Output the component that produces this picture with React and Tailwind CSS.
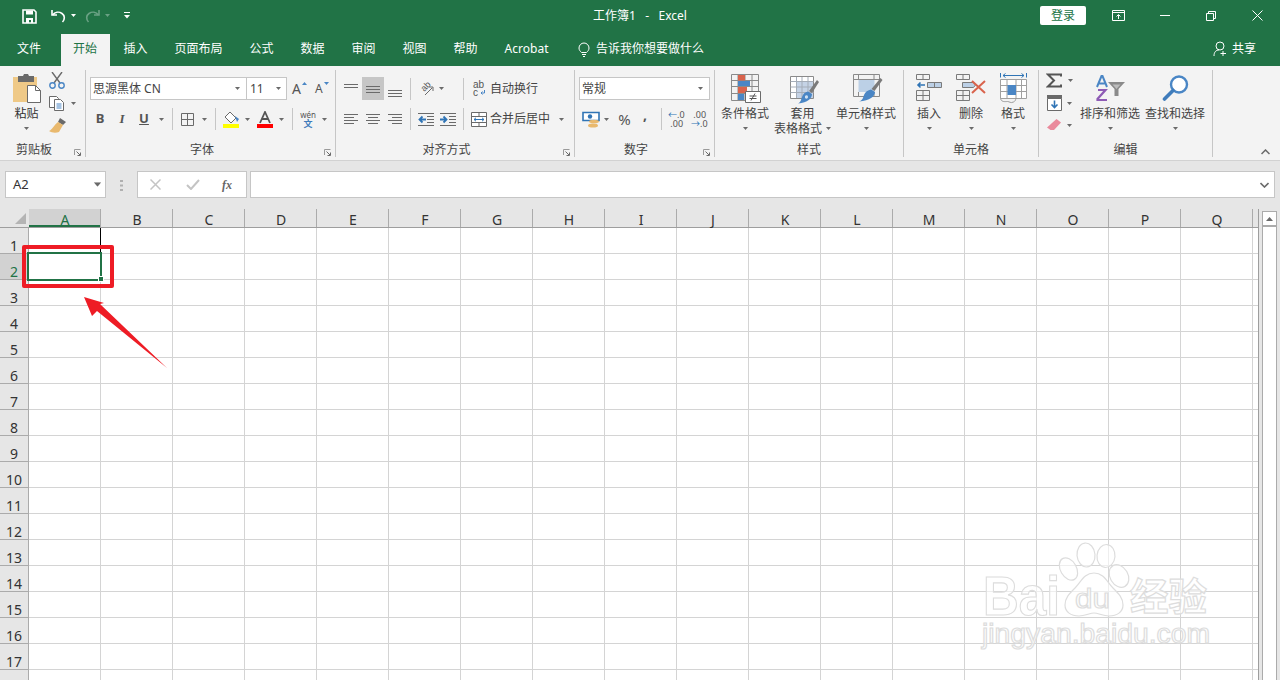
const FONT = "font-['Noto_Sans','Noto_Sans_CJK_SC',sans-serif]";
const COLS = "ABCDEFGHIJKLMNOPQ".split("");
const ROWS = Array.from({ length: 18 }, (_, i) => i + 1);
const TABS = ["插入", "页面布局", "公式", "数据", "审阅", "视图", "帮助", "Acrobat"];

function Caret({ className = "", color = "#6a6a6a" }) {
  return (
    <svg width="5" height="3" viewBox="0 0 5 3" className={`shrink-0 ${className}`}>
      <path d="M0 0h5L2.500 3z" fill={color} />
    </svg>
  );
}

function Sep({ className = "" }) {
  return <div className={`w-px h-[22px] bg-[#c6c6c6] shrink-0 ${className}`} />;
}

function Lines({ className = "", rows }) {
  return (
    <svg width="16" height="16" viewBox="0 0 16 16" className={`shrink-0 ${className}`}>
      {rows.map(([x1, x2, y], i) => (
        <path key={i} d={`M${x1} ${y}.5H${x2}`} stroke="#6a6a6a" />
      ))}
    </svg>
  );
}

function Launcher() {
  return (
    <svg width="7" height="7" viewBox="0 0 7 7">
      <path d="M.5 6V.5H6.500" fill="none" stroke="#9a9a9a" />
      <path d="M2.500 2.500L6 6M3.500 6.500h3v-3" fill="none" stroke="#6a6a6a" />
    </svg>
  );
}

function Group({ width, label, launcher, children }) {
  return (
    <div className={`${width} h-[87px] shrink-0 border-r border-[#c6c6c6] flex flex-col`}>
      <div className="h-[70px]">{children}</div>
      <div className="h-[17px] flex items-start text-[12px] text-[#444]">
        <div className="flex-1 text-center leading-[17px] pt-px">{label}</div>
        {launcher && (
          <div className="w-[17px] flex justify-end pr-[4px] pt-[9px]">
            <Launcher />
          </div>
        )}
      </div>
    </div>
  );
}

function BigButton({ width, icon, lines, caretInline }) {
  return (
    <div className={`${width} shrink-0 flex flex-col items-center`}>
      <div className="h-[36px] flex items-start justify-center pt-[4px]">{icon}</div>
      <div className="text-[12px] leading-[15px] text-[#444] whitespace-nowrap">{lines[0]}</div>
      {caretInline ? (
        <div className="h-[15px] flex items-center text-[12px] leading-[15px] text-[#444] whitespace-nowrap">
          {caretInline}
          <Caret className="ml-[4px]" />
        </div>
      ) : (
        <div className="h-[15px] flex items-center">
          <Caret />
        </div>
      )}
    </div>
  );
}

function CondIcon() {
  return (
    <svg width="30" height="29" viewBox="0 0 30 29" className="ml-[2px]">
      <path d="M.5.500h27v26H.5zM.5 6.500h27M.5 12.500h27M.5 19.500h27M7 .5v26M14 .5v26M21 .5v26" fill="none" stroke="#8a8a8a" />
      <path d="M7 1h7v5.500H7zM7 13h9v6H7z" fill="#d9634c" />
      <path d="M7 7h12v5H7zM7 20h6v6H7z" fill="#4a86c5" />
      <path d="M14.500 17.500h15v11h-15z" fill="#fff" stroke="#6a6a6a" />
      <path d="M18.500 22h7M18.500 24.500h7M24 19.500l-4 7" stroke="#555" fill="none" />
    </svg>
  );
}

function TableIcon() {
  return (
    <svg width="29" height="28" viewBox="0 0 29 28" className="ml-[4px] mt-[2px]">
      <path d="M.5.500h23v22H.5z" fill="#fff" stroke="#8a8a8a" />
      <path d="M6 5h17v17H6z" fill="#c5d3e6" />
      <path d="M.5 5.500h23M.5 11h23M.5 16.500h23M6.500 1v21M12 1v21M18 1v21" stroke="#a5adb8" fill="none" />
      <path d="M27 4l2 2-7 11-3-2z" fill="#7a7a7a" />
      <path d="M18 15.500l4 2.500c0 4-4 9-14 9.500 3-1.500 3-4 4-6.500 1-3 3-5 6-5.500z" fill="#4a86c5" />
      <path d="M15 20c1-1 3-1 3 1s-2 2-3 1z" fill="#cfe0f2" />
    </svg>
  );
}

function StyleIcon() {
  return (
    <svg width="30" height="28" viewBox="0 0 30 28" className="ml-[3px]">
      <path d="M.5.500h26v22H.5z" fill="#f3f3f3" stroke="#8a8a8a" />
      <path d="M.5 5.500h26M5.500 1v4.500M21 1v4.500M21 18v4.500M5.500 18v4.500" stroke="#8a8a8a" fill="none" />
      <path d="M5.500 6h16v12h-16z" fill="#bcd0e6" />
      <path d="M27.500 4l2 2-8 11-3-2z" fill="#7a7a7a" />
      <path d="M18 15.500l4 2.500c0 4-5 9-16 9.500 4-1.500 4-4 5-6.500 1-3 4-5 7-5.500z" fill="#4a86c5" />
    </svg>
  );
}

function InsertIcon() {
  return (
    <svg width="26" height="27" viewBox="0 0 26 27">
      <path d="M.5.500h13v5H.5zM7 .5v5M.5 16.500h13v10H.5zM.5 21.500h13M7 16.500v10" fill="none" stroke="#7a7a7a" />
      <path d="M11.500 8.500h14v5h-14zM18.500 8.500v5" fill="#bcd0e6" stroke="#7a7a7a" />
      <path d="M9 11H2M4.500 8.500L2 11l2.500 2.500" fill="none" stroke="#2f74b5" strokeWidth="1.600" />
    </svg>
  );
}

function DeleteIcon() {
  return (
    <svg width="30" height="27" viewBox="0 0 30 27">
      <path d="M.5.500h13v5H.5zM7 .5v5M.5 16.500h13v10H.5zM.5 21.500h13M7 16.500v10" fill="none" stroke="#7a7a7a" />
      <path d="M6.500 8.500h11l2 2.500-2 2.500h-11z" fill="#bcd0e6" stroke="#7a7a7a" />
      <path d="M16 7l13 12M29 7L16 19" stroke="#d9634c" strokeWidth="2" />
    </svg>
  );
}

function FormatIcon() {
  return (
    <svg width="27" height="31" viewBox="0 0 27 31" className="-mt-px">
      <path d="M.5 0v4.500M26.500 0v4.500M3 2.500h21M5.500.5L3 2.500l2.500 2M21.500.5l2.500 2-2.500 2" fill="none" stroke="#2f74b5" />
      <path d="M.5 6.500h26v19H.5zM.5 12.500h26M.5 18.500h26M7 6.500v19M16 6.500v19M21.500 6.500v19" fill="#fff" stroke="#a0a0a0" />
      <path d="M7.500 12h8.500v10H7.500z" fill="#4a86c5" />
      <path d="M.5 25.500c1 4 5 3 7 3s3 2 6 .5 2-4 2-4" fill="none" stroke="#9a9a9a" />
    </svg>
  );
}

function SortIcon() {
  return (
    <svg width="29" height="26" viewBox="0 0 29 26" className="mt-px">
      <path d="M11 25H1.500v-1L9.500 15H2" fill="none" stroke="#8e5bb5" strokeWidth="2.200" />
      <path d="M1 12L5.500 1h1L11 12M2.500 8.500h7" fill="none" stroke="#4a86c5" strokeWidth="2" />
      <path d="M12 7h17l-6.500 7v7h-4v-7z" fill="#8a8a8a" />
      <path d="M16.500 9.500h8l-4 4.500z" fill="#bdbdbd" />
    </svg>
  );
}

function FindIcon() {
  return (
    <svg width="27" height="26" viewBox="0 0 27 26" className="mt-px">
      <circle cx="17" cy="9.500" r="8" fill="#fff" stroke="#4a86c5" strokeWidth="2.400" />
      <path d="M11 15.500L2.500 24" stroke="#3f7cbb" strokeWidth="3.600" strokeLinecap="round" />
    </svg>
  );
}

function Corner() {
  return (
    <svg width="11" height="11" viewBox="0 0 11 11">
      <path d="M11 0v11H0z" fill="#b4b4b4" />
    </svg>
  );
}

function Baidu() {
  const outline = {
    fill: "#ffffff",
    fillOpacity: 0.6,
    stroke: "#dddddd",
    strokeWidth: 1.200,
  };
  return (
    <svg width="240" height="125" viewBox="0 0 240 125" className="absolute left-[975px] top-[535px] pointer-events-none">
      <g {...outline}>
        <ellipse cx="93.500" cy="34" rx="8" ry="12" transform="rotate(-30 93.500 34)" />
        <ellipse cx="111" cy="20" rx="9" ry="12" transform="rotate(-5 111 20)" />
        <ellipse cx="131" cy="21" rx="9" ry="11.500" transform="rotate(5 131 21)" />
        <ellipse cx="144" cy="41" rx="9" ry="12" transform="rotate(-30 144 41)" />
        <path d="M119 38c10 0 13 9 19 15 6 6 10 10 10 17 0 7-6 11-14 11-6 0-11-3-15-3s-9 3-15 3c-8 0-14-4-14-11 0-7 4-11 10-17 6-6 9-15 19-15z" />
        <text x="8" y="80" fontFamily="Liberation Sans" fontWeight="700" fontSize="55" textLength="77" lengthAdjust="spacingAndGlyphs">Bai</text>
        <text x="100" y="73" fontFamily="Liberation Sans" fontSize="28" textLength="35" lengthAdjust="spacingAndGlyphs">du</text>
        <text x="155" y="75" fontFamily="Noto Sans CJK SC" fontWeight="700" fontSize="38" textLength="77" lengthAdjust="spacingAndGlyphs">经验</text>
        <text x="7" y="108" fontFamily="Liberation Sans" fontSize="27" textLength="228" lengthAdjust="spacingAndGlyphs">jingyan.baidu.com</text>
      </g>
    </svg>
  );
}

export default function App() {
  return (
    <div className={`relative w-[1280px] h-[680px] overflow-hidden bg-[#e6e6e6] ${FONT}`}>
      {/* title bar */}
      <div className="h-[32px] bg-[#217346] flex items-center pb-px text-white">
        <svg width="15" height="15" viewBox="0 0 15 15" className="ml-[22px] mt-px">
          <path d="M1 1h11l2 2v11H1z" fill="none" stroke="#fff" strokeWidth="1.600" />
          <path d="M4 1.500h7v4H4zM4 9h7v5H9v-3H7v3H4z" fill="#fff" />
        </svg>
        <svg width="15" height="14" viewBox="0 0 15 14" className="ml-[14px] mt-px">
          <path d="M1 1v5h5" fill="none" stroke="#fff" strokeWidth="1.600" />
          <path d="M1.500 6C4 3 8 2.500 11 4.500s3 6 .5 8.500" fill="none" stroke="#fff" strokeWidth="1.600" />
        </svg>
        <Caret className="ml-[5px]" color="#fff" />
        <svg width="15" height="14" viewBox="0 0 15 14" className="ml-[9px] mt-px">
          <path d="M14 1v5H9" fill="none" stroke="#6aa184" strokeWidth="1.600" />
          <path d="M13.500 6C11 3 7 2.500 4 4.500s-3 6-.5 8.500" fill="none" stroke="#6aa184" strokeWidth="1.600" />
        </svg>
        <Caret className="ml-[5px]" color="#6aa184" />
        <svg width="6" height="7" viewBox="0 0 6 7" className="ml-[14px]">
          <path d="M0 .5h6" stroke="#fff" />
          <path d="M0 3h6L3 6.500z" fill="#fff" />
        </svg>
        <div className="ml-[462px] w-[96px] text-[12px] text-center whitespace-nowrap">工作簿1&nbsp;&nbsp; -&nbsp;&nbsp; Excel</div>
        <div className="ml-[352px] w-[46px] h-[19px] bg-white rounded-[2px] text-[#217346] text-[12px] leading-[19px] text-center">登录</div>
        <svg width="13" height="11" viewBox="0 0 13 11" className="ml-[26px]">
          <path d="M.5.500h12v10H.5zM.5 2.500h12" fill="none" stroke="#fff" />
          <path d="M6.500 9V5M4.500 6.500l2-2 2 2" fill="none" stroke="#fff" />
        </svg>
        <div className="ml-[35px] w-[10px] h-px bg-white" />
        <svg width="10" height="10" viewBox="0 0 10 10" className="ml-[36px]">
          <path d="M.5 2.500h7v7h-7zM2.500 2.500v-2h7v7h-2" fill="none" stroke="#fff" />
        </svg>
        <svg width="11" height="11" viewBox="0 0 11 11" className="ml-[36px]">
          <path d="M.5.500l10 10M10.500.5l-10 10" stroke="#fff" />
        </svg>
      </div>

      {/* tabs */}
      <div className="h-[34px] bg-[#217346] flex items-end text-white text-[12px]">
        <div className="ml-[5px] w-[48px] h-[32px] leading-[30px] text-center">文件</div>
        <div className="ml-[8px] w-[49px] h-[32px] leading-[30px] text-center pr-px bg-[#f3f3f3] text-[#217346]">开始</div>
        <div className="flex items-end ml-px gap-[2px]">
          {TABS.map((t) => (
            <div key={t} className="h-[32px] leading-[30px] text-center px-[12.500px] whitespace-nowrap">{t}</div>
          ))}
        </div>
        <div className="h-[32px] flex items-center pb-[2px] ml-[17px]">
          <svg width="12" height="15" viewBox="0 0 12 15">
            <path d="M3.500 10.500C2 9 1 8 1 6a5 5 0 0 1 10 0c0 2-1 3-2.500 4.500zM4 12.500h4M5 14.500h2" fill="none" stroke="#fff" />
          </svg>
          <span className="ml-[6px] whitespace-nowrap">告诉我你想要做什么</span>
        </div>
        <div className="h-[32px] flex items-center pb-[2px] ml-[509px]">
          <svg width="15" height="16" viewBox="0 0 15 16">
            <circle cx="7" cy="5" r="4" fill="none" stroke="#fff" />
            <path d="M1 15c0-4 2-6 5-6M10 10v5M7.500 12.500h5.500" fill="none" stroke="#fff" />
          </svg>
          <span className="ml-[4px] whitespace-nowrap">共享</span>
        </div>
      </div>

      {/* ribbon */}
      <div className="h-[95px] bg-[#f3f3f3] border-b border-[#d2d2d2] pt-[4px] flex relative">
        <Group width="w-[86px]" label="剪贴板" launcher>
          <div className="flex">
            <div className="ml-[12px] w-[29px] flex flex-col items-center">
              <svg width="29" height="30" viewBox="0 0 29 30" className="mt-[3px] shrink-0">
                <path d="M1 4h24v25H1z" fill="#efc987" />
                <path d="M6 3h5l1-2h4l1 2h5v6H6z" fill="#6a6a6a" />
                <path d="M15.500 12.500h8l5 5v12h-13z" fill="#fff" stroke="#6a6a6a" />
                <path d="M23.500 12.500v5h5" fill="none" stroke="#6a6a6a" />
              </svg>
              <div className="text-[12px] leading-[15px] mt-[3px] text-[#333] whitespace-nowrap">粘贴</div>
              <Caret className="mt-[6px]" />
            </div>
            <div className="ml-[8px] flex flex-col">
              <svg width="16" height="17" viewBox="0 0 16 17" className="mt-[2px]">
                <path d="M3 0l8 11M13 0L5 11" stroke="#6a6a6a" strokeWidth="1.400" />
                <circle cx="3.500" cy="13.500" r="2.700" fill="none" stroke="#4a86c5" strokeWidth="1.400" />
                <circle cx="12.500" cy="13.500" r="2.700" fill="none" stroke="#4a86c5" strokeWidth="1.400" />
              </svg>
              <div className="flex items-center mt-[7px]">
                <svg width="16" height="15" viewBox="0 0 16 15">
                  <path d="M.5.500h7l2 2v9h-9z" fill="#fff" stroke="#6a6a6a" />
                  <path d="M5.500 3.500h6l3 3v8h-9z" fill="#fff" stroke="#6a6a6a" />
                  <path d="M7.500 8h5M7.500 10h5M7.500 12h5" stroke="#4a86c5" />
                </svg>
                <Caret className="ml-[6px]" />
              </div>
              <svg width="17" height="15" viewBox="0 0 17 15" className="mt-[7px]">
                <path d="M11 0l6 4-3 3-5-3z" fill="#6a6a6a" />
                <path d="M9 4l5 3-4 7c-3 1-7 1-10-1 3-1 5-6 9-9z" fill="#e9b96e" />
              </svg>
            </div>
          </div>
        </Group>

        <Group width="w-[250px]" label="字体" launcher>
          <div className="flex mt-[7px] ml-[4px]">
            <div className="w-[157px] h-[23px] bg-white border border-[#c6c6c6] flex items-center pl-[2px] pr-[6px] justify-between text-[12px] text-[#444]">
              <span className="whitespace-nowrap">思源黑体 CN</span>
              <Caret />
            </div>
            <div className="w-[41px] h-[23px] -ml-px bg-white border border-[#c6c6c6] flex items-center pl-[3px] pr-[5px] justify-between text-[12px] text-[#444]">
              <span>11</span>
              <Caret />
            </div>
            <div className="ml-[5px] w-[15px] h-[23px] flex items-center text-[14px] text-[#555] relative">
              A
              <svg width="5" height="3" viewBox="0 0 5 3" className="absolute right-0 top-[5px]">
                <path d="M0 3h5L2.500 0z" fill="#4a86c5" />
              </svg>
            </div>
            <div className="ml-[8px] w-[14px] h-[23px] flex items-center text-[12px] text-[#555] relative">
              A
              <svg width="5" height="3" viewBox="0 0 5 3" className="absolute right-0 top-[5px]">
                <path d="M0 0h5L2.500 3z" fill="#4a86c5" />
              </svg>
            </div>
          </div>
          <div className="flex items-center h-[22px] mt-[8px] text-[#555]">
            <span className="ml-[9px] w-[10px] text-center text-[13px] font-bold">B</span>
            <span className="ml-[13px] w-[8px] text-center text-[13px] italic font-['Liberation_Serif',serif] font-bold">I</span>
            <span className="ml-[13px] w-[10px] text-center text-[13px] font-bold underline">U</span>
            <Caret className="ml-[10px]" />
            <Sep className="ml-[8px]" />
            <svg width="13" height="13" viewBox="0 0 13 13" className="ml-[8px] shrink-0">
              <path d="M.5.500h12v12H.5zM6.500.5v12M.5 6.500h12" fill="none" stroke="#6a6a6a" />
            </svg>
            <Caret className="ml-[8px]" />
            <Sep className="ml-[8px]" />
            <svg width="16" height="17" viewBox="0 0 16 17" className="ml-[7px] shrink-0">
              <path d="M7 1l6 6-5 5-6-6z" fill="#fff" stroke="#6a6a6a" />
              <path d="M12 5l4 3-2 3z" fill="#4a86c5" />
              <path d="M0 13h16v4H0z" fill="#ffff00" />
            </svg>
            <Caret className="ml-[6px]" />
            <svg width="16" height="17" viewBox="0 0 16 17" className="ml-[7px] shrink-0">
              <path d="M3 12L8 1l5 11M5 8h6" fill="none" stroke="#555" strokeWidth="1.800" />
              <path d="M0 13h16v4H0z" fill="#ff0000" />
            </svg>
            <Caret className="ml-[6px]" />
            <Sep className="ml-[8px]" />
            <div className="ml-[6px] w-[18px] flex flex-col items-center text-[8px] leading-[9px]">
              <span className="text-[#555]">wén</span>
              <span className="text-[#3f7cbb] font-bold text-[9px]">文</span>
            </div>
            <Caret className="ml-[5px]" />
          </div>
        </Group>

        <Group width="w-[239px]" label="对齐方式" launcher>
          <div className="flex items-center h-[23px] mt-[7px]">
            <Lines className="ml-[7px]" rows={[[1, 15, 3], [1, 15, 6]]} />
            <div className="ml-[3px] w-[22px] h-[23px] bg-[#c6c6c6] flex items-center justify-center shrink-0">
              <Lines rows={[[1, 15, 5], [1, 15, 8], [1, 15, 11]]} />
            </div>
            <Lines className="ml-[3px]" rows={[[1, 15, 9], [1, 15, 12], [1, 15, 15]]} />
            <Sep className="ml-[7px]" />
            <svg width="16" height="16" viewBox="0 0 16 16" className="ml-[7px] shrink-0">
              <text x="3" y="9" fontSize="9" fill="#555" fontFamily="Liberation Sans" transform="rotate(-45 7 6)">ab</text>
              <path d="M7 14l7-7M11 6h4v4" fill="none" stroke="#6a6a6a" />
            </svg>
            <Caret className="ml-[5px]" />
            <Sep className="ml-[19px]" />
            <div className="ml-[9px] w-[13px] shrink-0 text-[10px] leading-[8px] text-[#555] font-['Liberation_Sans',sans-serif]">
              <div>ab</div>
              <div className="flex items-center">
                c
                <svg width="5" height="5" viewBox="0 0 5 5" className="ml-[2px]">
                  <path d="M4.500 0v3H1M2.500 1.500L1 3l1.500 1.500" fill="none" stroke="#4a86c5" />
                </svg>
              </div>
            </div>
            <span className="ml-[4px] text-[12px] text-[#444] whitespace-nowrap">自动换行</span>
          </div>
          <div className="flex items-center h-[22px] mt-[8px]">
            <Lines className="ml-[7px]" rows={[[1, 15, 3], [1, 11, 6], [1, 15, 9], [1, 11, 12]]} />
            <Lines className="ml-[6px]" rows={[[1, 15, 3], [3, 13, 6], [1, 15, 9], [3, 13, 12]]} />
            <Lines className="ml-[6px]" rows={[[1, 15, 3], [5, 15, 6], [1, 15, 9], [5, 15, 12]]} />
            <Sep className="ml-[7px]" />
            <svg width="16" height="14" viewBox="0 0 16 14" className="ml-[7px] shrink-0">
              <path d="M0 1.500h16M9 4.500h7M9 7.500h7M9 10.500h7M0 13.500h16" stroke="#6a6a6a" />
              <path d="M8 7.500H2M4.500 4.500l-3 3 3 3" fill="none" stroke="#2f74b5" strokeWidth="1.800" />
            </svg>
            <svg width="16" height="14" viewBox="0 0 16 14" className="ml-[6px] shrink-0">
              <path d="M0 1.500h16M9 4.500h7M9 7.500h7M9 10.500h7M0 13.500h16" stroke="#6a6a6a" />
              <path d="M0 7.500h6M3.500 4.500l3 3-3 3" fill="none" stroke="#2f74b5" strokeWidth="1.800" />
            </svg>
            <Sep className="ml-[7px]" />
            <svg width="16" height="15" viewBox="0 0 16 15" className="ml-[7px] shrink-0">
              <path d="M.5.500h15v14H.5zM.5 4.500h15M.5 10.500h15M8 .5v4M8 10.500v4" fill="#fff" stroke="#6a6a6a" />
              <path d="M3 7.500h10M5 5.800L3 7.500l2 1.700M11 5.800l2 1.700-2 1.700" fill="none" stroke="#2f74b5" />
            </svg>
            <span className="ml-[3px] text-[12px] text-[#444] whitespace-nowrap">合并后居中</span>
            <Caret className="ml-[9px]" />
          </div>
        </Group>

        <Group width="w-[140px]" label="数字" launcher>
          <div className="ml-[4px] mt-[7px] w-[131px] h-[23px] bg-white border border-[#c6c6c6] flex items-center pl-[2px] pr-[6px] justify-between text-[12px] text-[#444]">
            <span>常规</span>
            <Caret />
          </div>
          <div className="flex items-center h-[22px] mt-[8px]">
            <svg width="19" height="17" viewBox="0 0 19 17" className="ml-[7px] shrink-0">
              <path d="M1 1.500h16v8H1z" fill="#fff" stroke="#2f74b5" strokeWidth="1.600" />
              <circle cx="8" cy="5.500" r="2.200" fill="#2f74b5" />
              <ellipse cx="12" cy="10.500" rx="5" ry="1.800" fill="#e9b96e" />
              <ellipse cx="11" cy="14.500" rx="5" ry="2" fill="#e9b96e" />
            </svg>
            <Caret className="ml-[3px]" />
            <span className="ml-[8px] w-[15px] text-center text-[15px] text-[#555]">%</span>
            <span className="ml-[10px] w-[6px] text-center text-[14px] font-bold text-[#555] leading-[14px] pb-[8px]">,</span>
            <Sep className="ml-[13px]" />
            <div className="ml-[6px] w-[15px] text-[9px] leading-[9px] text-[#555] shrink-0 whitespace-nowrap">
              <span className="text-[#2f74b5]">←</span>.0<br />&nbsp;.00
            </div>
            <div className="ml-[8px] w-[15px] text-[9px] leading-[9px] text-[#555] shrink-0 whitespace-nowrap">
              &nbsp;.00<br /><span className="text-[#2f74b5]">→</span>.0
            </div>
          </div>
        </Group>

        <Group width="w-[189px]" label="样式">
          <div className="flex ml-[6px]">
            <BigButton width="w-[48px]" icon={<CondIcon />} lines={["条件格式"]} />
            <BigButton width="w-[67px]" icon={<TableIcon />} lines={["套用"]} caretInline="表格格式" />
            <BigButton width="w-[60px]" icon={<StyleIcon />} lines={["单元格样式"]} />
          </div>
        </Group>

        <Group width="w-[135px]" label="单元格">
          <div className="flex ml-[4px]">
            <BigButton width="w-[42px]" icon={<InsertIcon />} lines={["插入"]} />
            <BigButton width="w-[42px]" icon={<DeleteIcon />} lines={["删除"]} />
            <BigButton width="w-[42px]" icon={<FormatIcon />} lines={["格式"]} />
          </div>
        </Group>

        <Group width="w-[174px]" label="编辑">
          <div className="flex ml-[7px]">
            <div className="w-[34px] flex flex-col">
              <div className="flex items-center h-[16px] mt-[2px]">
                <svg width="16" height="15" viewBox="0 0 16 15">
                  <path d="M15 3.500V1.500H2L8 7.500 2 13.500h13v-2" fill="none" stroke="#555" strokeWidth="2" />
                </svg>
                <Caret className="ml-[6px]" />
              </div>
              <div className="flex items-center h-[16px] mt-[7px]">
                <svg width="15" height="16" viewBox="0 0 15 16" className="ml-px">
                  <path d="M.5 3.500h14v12H.5z" fill="#fff" stroke="#6a6a6a" />
                  <path d="M0 0h15v3.500H0z" fill="#6a6a6a" />
                  <path d="M7.500 5.500v7M4.500 9.500l3 3 3-3" fill="none" stroke="#2f74b5" strokeWidth="1.600" />
                </svg>
                <Caret className="ml-[5px]" />
              </div>
              <div className="flex items-center h-[14px] mt-[7px]">
                <svg width="14" height="12" viewBox="0 0 14 12" className="ml-px">
                  <path d="M9.500 0L14 3.500 7 11H3.500L0 8.500z" fill="#ea8a9c" />
                </svg>
                <Caret className="ml-[6px]" />
              </div>
            </div>
            <BigButton width="w-[60px]" icon={<SortIcon />} lines={["排序和筛选"]} />
            <BigButton width="ml-[5px] w-[60px]" icon={<FindIcon />} lines={["查找和选择"]} />
          </div>
        </Group>

        <svg width="9" height="6" viewBox="0 0 9 6" className="absolute left-[1261px] top-[83px]">
          <path d="M.5 5L4.500 1l4 4" fill="none" stroke="#6a6a6a" strokeWidth="1.500" />
        </svg>
      </div>

      {/* formula bar */}
      <div className="h-[48px] flex items-start pt-[10px]">
        <div className="ml-[5px] w-[101px] h-[27px] bg-white border border-[#c6c6c6] flex items-center justify-between pl-[7px] pr-[5px] text-[13px] text-[#333]">
          <span>A2</span>
          <Caret className="scale-150" />
        </div>
        <svg width="3" height="11" viewBox="0 0 3 11" className="ml-[14px] mt-[9px]">
          <path d="M0 0h3v2H0zM0 4.500h3v2H0zM0 9h3v2H0z" fill="#b0b0b0" />
        </svg>
        <div className="ml-[14px] w-[110px] h-[27px] bg-white border border-[#c6c6c6] flex items-center">
          <svg width="11" height="11" viewBox="0 0 11 11" className="ml-[12px]">
            <path d="M.5.500l10 10M10.500.5l-10 10" stroke="#c4c4c4" strokeWidth="1.500" />
          </svg>
          <svg width="14" height="11" viewBox="0 0 14 11" className="ml-[25px]">
            <path d="M1 6l4 4 8-9" fill="none" stroke="#c4c4c4" strokeWidth="2" />
          </svg>
          <span className="ml-[22px] text-[12px] italic font-bold text-[#666] font-['Liberation_Serif',serif]">fx</span>
        </div>
        <div className="ml-[3px] w-[1025px] h-[27px] bg-white border border-[#c6c6c6] flex items-center justify-end pr-[5px]">
          <svg width="9" height="6" viewBox="0 0 9 6">
            <path d="M.5 1l4 4 4-4" fill="none" stroke="#6a6a6a" strokeWidth="1.600" />
          </svg>
        </div>
      </div>

      {/* sheet */}
      <div className="flex">
        <div className="w-[1259px] shrink-0 border-r border-[#9e9e9e]">
          <div className="flex h-[19px] border-b border-[#9e9e9e]">
            <div className="w-[29px] shrink-0 flex items-end justify-end pr-[3px] pb-[3px]">
              <Corner />
            </div>
            {COLS.map((c) => (
              <div
                key={c}
                className={`w-[72px] shrink-0 text-center text-[14px] leading-[22px] pl-px border-r ${
                  c === "A"
                    ? "bg-[#d2d2d2] text-[#217346] border-[#ababab] shadow-[inset_0_-2px_0_#217346]"
                    : "text-[#333] border-[#ababab]"
                }`}
              >
                {c}
              </div>
            ))}
          </div>
          {ROWS.map((r) => (
            <div key={r} className="flex h-[26px]">
              <div
                className={`w-[29px] shrink-0 border-r border-b border-[#ababab] text-[14px] leading-[20px] pt-[8px] text-center ${
                  r === 2 ? "bg-[#d2d2d2] text-[#217346]" : "text-[#333]"
                }`}
              >
                {r < 18 ? r : null}
              </div>
              {COLS.map((c) => (
                <div key={c} className="w-[72px] shrink-0 bg-white border-r border-b border-[#d4d4d4]" />
              ))}
              <div className="flex-1 bg-white border-b border-[#d4d4d4]" />
            </div>
          ))}
        </div>
        <div className="ml-[3px] w-[15px] flex flex-col mt-[2px]">
          <div className="h-[15px] bg-white border border-[#ababab] flex items-center justify-center">
            <svg width="7" height="4" viewBox="0 0 7 4">
              <path d="M0 4h7L3.500 0z" fill="#6a6a6a" />
            </svg>
          </div>
          <div className="h-[480px] bg-white border-x border-[#ababab] border-t" />
        </div>
      </div>

      {/* selected cell */}
      <div className="absolute left-[27px] top-[252px] w-[75px] h-[29px] border-2 border-[#217346]" />
      <div className="absolute left-[98px] top-[276px] w-[6px] h-[6px] bg-[#217346] border border-white" />
      <div className="absolute left-[100px] top-[228px] w-px h-[24px] bg-black" />

      {/* annotation */}
      <div className="absolute left-[22px] top-[245px] w-[92px] h-[43px] border-[4px] border-[#ee1c25] rounded-[2px]" />
      <svg width="100" height="85" viewBox="0 0 100 85" className="absolute left-[80px] top-[290px]">
        <path d="M4 7l20 6-4 1 67 64-70-57-5 5z" fill="#ee1c25" />
      </svg>

      <Baidu />
    </div>
  );
}
